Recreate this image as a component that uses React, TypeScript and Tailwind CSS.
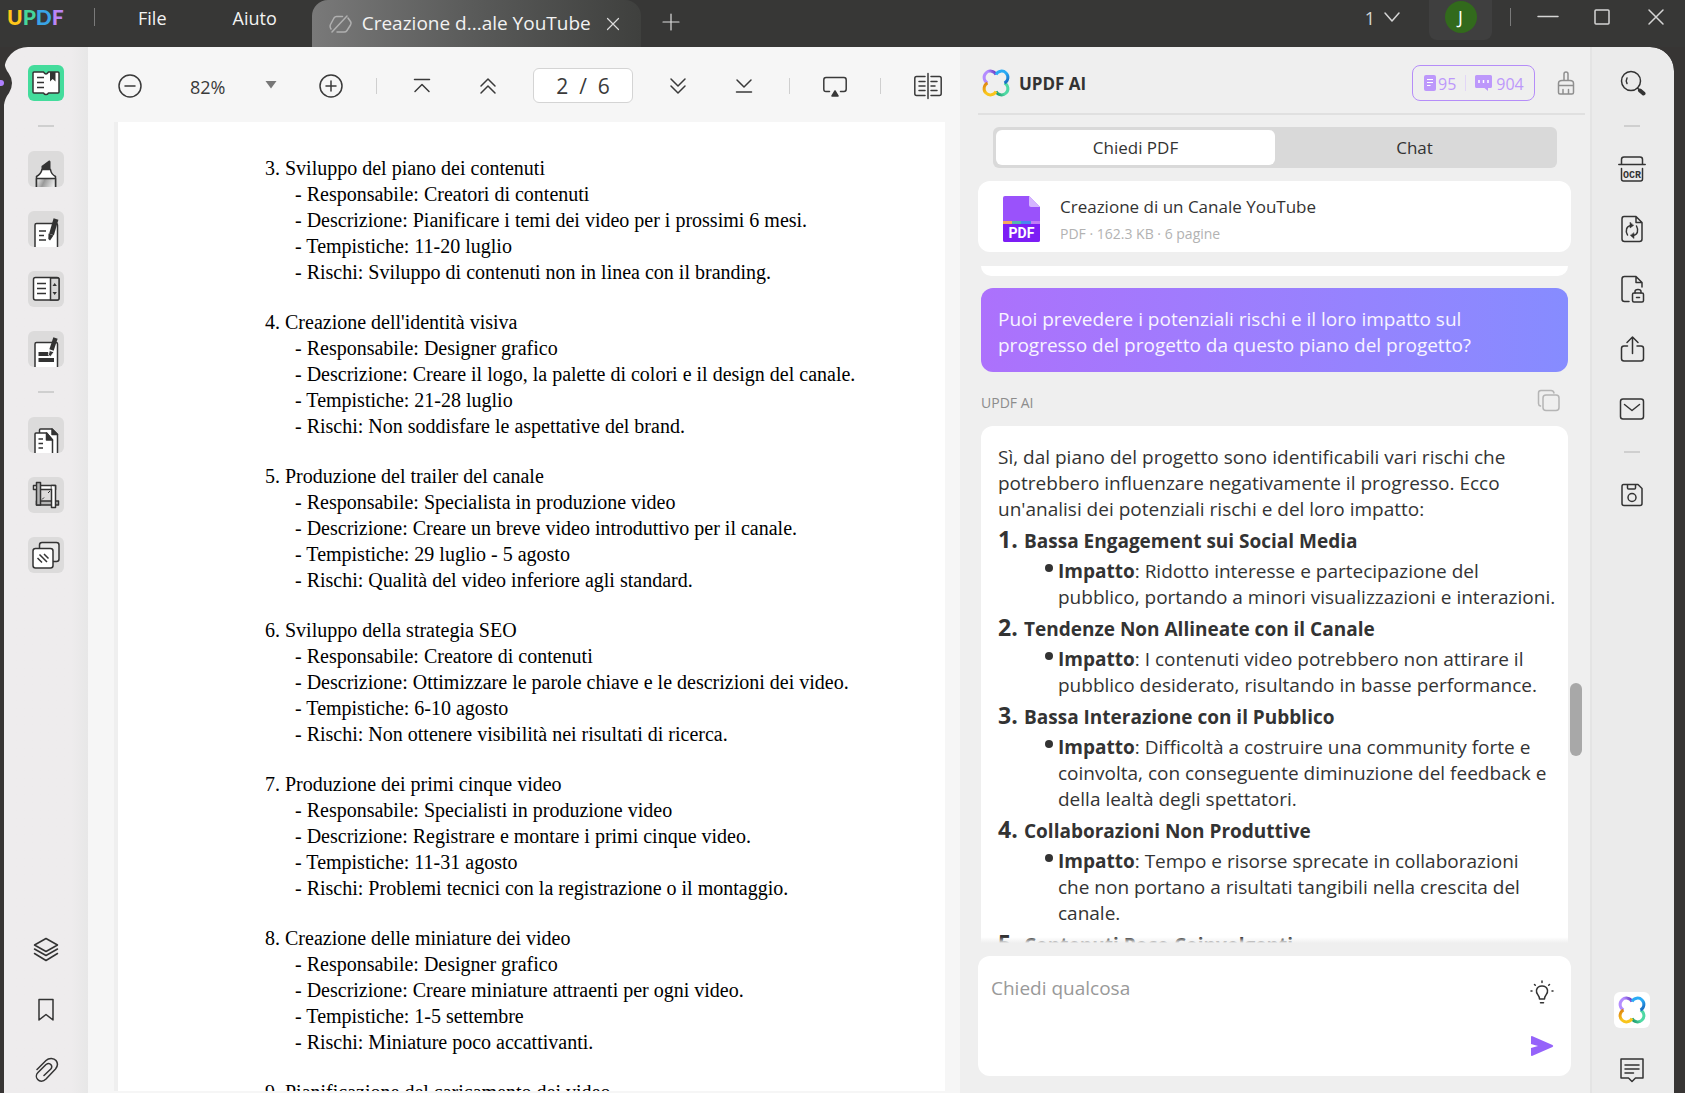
import React from "react";

type IconProps = { children: React.ReactNode; size?: number; w?: number };

const INK = "#333333";

function Ico({ children, size = 24, w = 2 }: IconProps) {
  return (
    <svg
      width={size}
      height={size}
      viewBox={`0 0 ${size} ${size}`}
      fill="none"
      stroke="currentColor"
      strokeWidth={w}
      strokeLinecap="round"
      strokeLinejoin="round"
      aria-hidden="true"
      className="shrink-0"
    >
      {children}
    </svg>
  );
}

function Clover({ id }: { id: string }) {
  return (
    <svg width="28" height="28" viewBox="0 0 28 28" fill="none" strokeWidth="3" aria-hidden="true" className="shrink-0">
      <defs>
        <linearGradient id={id + "a"} x1="2" y1="10" x2="14" y2="5" gradientUnits="userSpaceOnUse">
          <stop offset="0.5" stopColor="#b48cff" />
          <stop offset="1" stopColor="#6a3fc8" />
        </linearGradient>
        <linearGradient id={id + "b"} x1="16" y1="3" x2="23" y2="14" gradientUnits="userSpaceOnUse">
          <stop offset="0.4" stopColor="#2aabf5" />
          <stop offset="1" stopColor="#1a6fc4" />
        </linearGradient>
        <linearGradient id={id + "c"} x1="26" y1="17" x2="14" y2="23" gradientUnits="userSpaceOnUse">
          <stop offset="0.5" stopColor="#4fd9a4" />
          <stop offset="1" stopColor="#1d9a6c" />
        </linearGradient>
        <linearGradient id={id + "d"} x1="12" y1="25" x2="5" y2="14" gradientUnits="userSpaceOnUse">
          <stop offset="0.4" stopColor="#f9c51c" />
          <stop offset="1" stopColor="#e08a10" />
        </linearGradient>
      </defs>
      <path d="M5.500 14A6.300 6.300 0 1 1 14 5.500" stroke={`url(#${id}a)`} />
      <path d="M22.500 14A6.300 6.300 0 1 1 14 22.500" stroke={`url(#${id}c)`} />
      <path d="M14 22.500A6.300 6.300 0 1 1 5.500 14" stroke={`url(#${id}d)`} />
      <path d="M14 5.500A6.300 6.300 0 1 1 22.500 14" stroke={`url(#${id}b)`} />
    </svg>
  );
}

function Tool({ label, active, children }: { label: string; active?: boolean; children: React.ReactNode }) {
  return (
    <button
      type="button"
      aria-label={label}
      className={
        active
          ? "size-9 overflow-hidden rounded-md bg-[#44dc9c]"
          : "size-9 overflow-hidden rounded-md bg-[#dcdbdb]"
      }
    >
      <svg width="36" height="36" viewBox="0 0 36 36" fill="none" stroke={INK} strokeWidth="1.500" strokeLinejoin="round" aria-hidden="true">
        {children}
      </svg>
    </button>
  );
}

function Plain({ label, children, size = 28 }: { label: string; children: React.ReactNode; size?: number }) {
  return (
    <button type="button" aria-label={label} className="flex size-9 items-center justify-center text-[#333]">
      <Ico size={size} w={1.5}>{children}</Ico>
    </button>
  );
}

const Dash = () => <div className="h-0.5 w-4 bg-[#cfcfcf]" />;

function LeftBar() {
  return (
    <nav aria-label="Strumenti" className="flex w-21 shrink-0 flex-col items-center gap-6 bg-linear-to-r from-[#eeeced] from-80% to-[#e7e7e7] pt-[18px] pb-[5px]">
      <Tool label="Lettore" active>
        <path d="M6 7H15.500Q17 9 18 9Q19 9 20.500 7H30Q31 7 31 8V27Q31 28 30 28H20.500Q19.500 29.500 18 29.500T15.500 28H6Q5 28 5 27V8Q5 7 6 7Z" fill="#fff" />
        <path d="M9 12.500H16M9 17.500H16M9 22.500H16" />
        <path d="M22 7H27.500V16.500L24.700 14L22 16.500Z" fill={INK} stroke="none" />
      </Tool>
      <Dash />
      <Tool label="Commento">
        <defs>
          <linearGradient id="hl" x1="8" y1="27" x2="28" y2="36" gradientUnits="userSpaceOnUse">
            <stop stopColor="#ffffff" />
            <stop offset="0.400" stopColor="#999" />
            <stop offset="1" stopColor="#fff" />
          </linearGradient>
        </defs>
        <path d="M13.500 19V15L21 9.500Q22.500 9 22.500 11V19Z" fill={INK} stroke="none" />
        <path d="M14 18.500H22.500Q23 23 27.500 25.500V37H8.500V25.500Q13 23 14 18.500Z" fill="#fff" />
        <path d="M8.500 27.500H27.500V37H8.500Z" fill="url(#hl)" />
      </Tool>
      <Tool label="Modifica">
        <path d="M7 37V14Q7 12.500 8.500 12.500H28Q29.500 12.500 29.500 14V37" fill="#fff" />
        <path d="M11 20H18M11 24.500H16M11 29H18" />
        <path d="M28 8L23.500 23.500" strokeWidth="5" />
        <path d="M20.500 22.500L25.500 24.500L22 29.500L20.300 28Z" fill={INK} stroke="none" />
      </Tool>
      <Tool label="Modulo">
        <rect x="5.500" y="6.500" width="25.500" height="22.500" rx="2" fill="#fff" />
        <path d="M22.500 7H29.500Q31 7 31 8V27.500Q31 29 29.500 29H22.500Z" fill="#d5d5d5" />
        <path d="M9 12.500H18M9 17.500H18M9 22.500H18" />
        <path d="M24.500 15L26.700 12L28.900 15ZM24.500 21L26.700 24L28.900 21Z" fill={INK} stroke="none" />
      </Tool>
      <Tool label="Oscura">
        <path d="M7 37V13Q7 11.500 8.500 11.500H28Q29.500 11.500 29.500 13V37" fill="#fff" />
        <path d="M10.500 21H20L22 25H10.500ZM10.500 27H26V31H10.500Z" fill={INK} stroke="none" />
        <path d="M27.500 7L23.500 19" strokeWidth="4.500" stroke={INK} />
        <path d="M21.500 19.500L26 21L22.500 25.500L20.300 24Z" fill={INK} stroke="#fff" strokeWidth="0.800" />
      </Tool>
      <Dash />
      <Tool label="Organizza pagine">
        <path d="M11.500 16V13Q11.500 12 12.500 12H24L29.500 17.500V37H15" fill="#fff" />
        <path d="M24 12L29.500 17.500H24Z" fill={INK} />
        <path d="M7 37V17Q7 16 8 16H18.500L24.500 23V37" fill="#fff" />
        <path d="M18.500 16L24.500 23H18.500Z" fill={INK} />
        <path d="M10.500 22H15M10.500 26.500H15M10.500 31H15" />
      </Tool>
      <Tool label="Ritaglia">
        <path d="M5.500 8.500H27.500V12.500H5.500Z" fill="#fff" />
        <path d="M8.500 24H30.500V28H8.500Z" fill="#b5b5b5" />
        <path d="M8.500 5.500H12.500V28H8.500Z" fill="#b5b5b5" />
        <path d="M23.500 8.500H27.500V30.500H23.500Z" fill="#fff" />
        <path d="M24.300 9.300V11.700" stroke="#fff" />
        <path d="M14 22.500L16 20.500M20 16L22 14" strokeWidth="1" />
      </Tool>
      <Tool label="Filigrana">
        <rect x="11.500" y="5.500" width="19.500" height="19" rx="2.500" fill="#e9e9e9" />
        <rect x="5" y="11.500" width="20" height="19.500" rx="2.500" fill="#fff" />
        <path d="M9.500 21L14 25.500M11.500 17.500L19 25M16 17L20.500 21.500" />
      </Tool>
      <div className="mt-auto flex flex-col gap-6">
        <Plain label="Livelli">
          <path d="M14 2.500L25.500 9L14 15.500L2.500 9ZM2.500 13L14 19.500L25.500 13M2.500 17.500L14 24.500L25.500 17.500" />
        </Plain>
        <Plain label="Segnalibri">
          <path d="M7 3.500H21V24L14 18.500L7 24Z" />
        </Plain>
        <Plain label="Allegati">
          <path d="M5 13.500L14 4.500C17 1.500 22 2 24 4.500C26 7 25.500 10.500 23.500 13L14 23C11 26 7.500 25.500 5.700 23.500C3.800 21.500 4 18.500 6 16.500L14 8.500C16 7 18 7.500 19 8.700C20 10 20 11.500 18.800 13L12 19.500" />
        </Plain>
      </div>
    </nav>
  );
}

function RightBar() {
  return (
    <nav aria-label="Azioni" className="flex w-21 shrink-0 flex-col items-center gap-6 rounded-tr-3xl border-l-2 border-[#e4e4e4] bg-[#ebebeb] pt-[18px] pr-0.5 pb-[5px]">
      <Plain label="Cerca">
        <circle cx="13" cy="12" r="9.500" />
        <path d="M9 9Q7.500 12 9 14.500" />
        <path d="M19.500 19L21 20.500" />
        <path d="M22 21.500L25.500 24.500" strokeWidth="4" />
      </Plain>
      <Dash />
      <Plain label="OCR">
        <path d="M3.500 9V4.500Q3.500 2 6 2H22Q24.500 2 24.500 4.500V9M0.800 9.500H27.200M3.500 13.500V24Q3.500 26 5.500 26H22.500Q24.500 26 24.500 24V13.500" />
        <text x="14" y="22.500" textAnchor="middle" fontSize="10" fontWeight="700" fill={INK} stroke="none" fontFamily="Liberation Mono, monospace">OCR</text>
      </Plain>
      <Plain label="Converti">
        <path d="M6 1.500H18L24 7.500V24Q24 26.500 21.500 26.500H6.500Q4 26.500 4 24V4Q4 1.500 6 1.500ZM18 1.500V7.500H24" />
        <path d="M9.500 20C7 15.500 8.500 11 13 10.500M18.500 11C21 15.500 19.500 20 15 20.500" />
        <path d="M12 7.500V13L15.500 10.500ZM16 18V23.500L12.500 20.500Z" fill={INK} strokeWidth="0.500" />
      </Plain>
      <Plain label="Proteggi">
        <path d="M11 26.500H6.500Q4 26.500 4 24V4Q4 1.500 6.500 1.500H18L24 7.500V12M18 1.500V7.500H24" />
        <rect x="14.500" y="18" width="11" height="9" rx="1.500" />
        <path d="M17 18V16.500Q17 14.500 20 14.500T23 16.500V18M18.500 22.500H21.500" />
      </Plain>
      <Plain label="Condividi">
        <path d="M9.500 11H6Q3.500 11 3.500 13.500V23.500Q3.500 26 6 26H23Q25.500 26 25.500 23.500V13.500Q25.500 11 23 11H19M14.500 18.500V2M9 7.500L14.500 2L20 7.500" />
      </Plain>
      <Plain label="E-mail">
        <rect x="2.500" y="4" width="23" height="20" rx="2.500" />
        <path d="M6.500 9.500L14 15.500L21.500 9.500" />
      </Plain>
      <Dash />
      <Plain label="Salva">
        <path d="M5.500 3.500H20L24 7.500V22.500Q24 24.500 22 24.500H6Q4 24.500 4 22.500V5.500Q4 3.500 5.500 3.500ZM9.500 3.500V7Q9.500 8 10.500 8H16.500Q17.500 8 17.500 7V3.500" />
        <circle cx="14" cy="16.500" r="4" />
      </Plain>
      <div className="mt-auto flex flex-col gap-6">
        <button type="button" aria-label="UPDF AI" className="flex size-9 items-center justify-center rounded-md bg-white">
          <Clover id="r" />
        </button>
        <Plain label="Commenti">
          <path d="M3 3H25V22H17.500L14 25.500L10.500 22H3Z" />
          <path d="M7 9H21M7 13H21M7 17H15.500" />
        </Plain>
      </div>
    </nav>
  );
}

function TitleBar() {
  return (
    <header className="flex h-[47px] shrink-0 items-start bg-[#373736] text-[#f2f2f2]">
      <div className="flex h-9 items-center">
        <div className="w-[88px] pb-0.5 pl-[7px] font-['Lato'] text-[21px] font-black">
          <span className="text-[#ffc61a]">U</span>
          <span className="text-[#45d69c]">P</span>
          <span className="text-[#39a4e6]">D</span>
          <span className="text-[#bb85f5]">F</span>
        </div>
        <div className="mb-0.5 ml-1.5 h-[18px] w-px bg-[#7a7a7a]" />
        <button type="button" className="ml-[43px] text-lg">File</button>
        <button type="button" className="ml-[66px] text-lg">Aiuto</button>
      </div>
      <div className="ml-[35px] flex h-full w-[329px] items-center rounded-t-2xl bg-linear-to-r from-[#797979] via-[#595a59] via-50% to-[#3f403e] pl-4">
        <span className="text-[#b0b0b0]">
          <Ico w={1.5}>
            <path d="M4 20L19 4M14.500 4.500H8.500Q7 4.500 6 6L2.500 12.500Q1.500 14.500 3 17M9 20H16Q18 20 19 18.500L22.500 13Q23.500 11 22.500 9.500L20 6" />
          </Ico>
        </span>
        <span className="ml-2.5 text-[19px] whitespace-nowrap">Creazione d...ale YouTube</span>
        <button type="button" aria-label="Chiudi scheda" className="mr-5 ml-auto text-[#dcdcdc]">
          <Ico size={16} w={1.200}><path d="M2.500 2.500L13.500 13.500M13.500 2.500L2.500 13.500" /></Ico>
        </button>
      </div>
      <button type="button" aria-label="Nuova scheda" className="ml-5 flex h-11 items-center text-[#ddd]">
        <Ico size={20} w={1.200}><path d="M10 2V18M2 10H18" /></Ico>
      </button>
      <div className="ml-auto flex h-[34px] items-center text-[#d5d5d5]">
        <button type="button" className="mr-7 flex items-center gap-2 pt-0.5 text-lg">
          1
          <Ico size={18} w={1.500}><path d="M2 4L9 12L16 4" /></Ico>
        </button>
        <div className="flex h-10 w-[63px] items-center justify-center self-start rounded-b-lg bg-[#3f3f3f]">
          <button type="button" className="mb-1.5 size-8 rounded-full bg-[#326a1c] text-lg leading-8 text-white">J</button>
        </div>
        <div className="ml-[18px] h-[18px] w-px bg-[#7a7a7a]" />
        <button type="button" aria-label="Riduci" className="ml-[26px]">
          <Ico size={22} w={1.500}><path d="M1 10.500H21" /></Ico>
        </button>
        <button type="button" aria-label="Ingrandisci" className="ml-8">
          <Ico size={22} w={1.500}><rect x="4" y="4" width="14" height="14" rx="1" /></Ico>
        </button>
        <button type="button" aria-label="Chiudi" className="mr-[18px] ml-8">
          <Ico size={22} w={1.500}><path d="M4 4L18 18M18 4L4 18" /></Ico>
        </button>
      </div>
    </header>
  );
}

const Sep = () => <div className="h-4 w-px bg-[#cfcfcf]" />;

function Btn({ label, children, size = 24 }: { label: string; children: React.ReactNode; size?: number }) {
  return (
    <button type="button" aria-label={label}>
      <Ico size={size} w={1.500}>{children}</Ico>
    </button>
  );
}

function Toolbar() {
  return (
    <div className="flex h-[75px] items-center px-[30px] pt-0.5 text-[#3a3a3a]">
      <Btn label="Riduci zoom"><circle cx="12" cy="12" r="11" /><path d="M7 12H17" /></Btn>
      <label className="relative ml-12">
        <select aria-label="Zoom" className="w-[89px] appearance-none bg-transparent pt-0.5 text-lg">
          <option>82%</option>
        </select>
        <svg width="12" height="8" viewBox="0 0 12 8" className="pointer-events-none absolute top-2.5 right-0.5" aria-hidden="true">
          <path d="M0.500 0H11.500L6 7.500Z" fill="#777" />
        </svg>
      </label>
      <div className="ml-10 flex items-center gap-[33px]">
        <Btn label="Aumenta zoom"><circle cx="12" cy="12" r="11" /><path d="M7 12H17M12 7V17" /></Btn>
        <Sep />
        <div className="flex gap-[42px]">
          <Btn label="Prima pagina"><path d="M4.500 5.500H19.500M5 17.500L12 10.500L19 17.500" /></Btn>
          <Btn label="Pagina precedente"><path d="M5 12L12 5L19 12M5 19L12 12L19 19" /></Btn>
        </div>
        <input
          aria-label="Pagina"
          defaultValue="2  /  6"
          className="h-[35px] w-[100px] rounded-md border border-[#d4d4d4] bg-white text-center text-[21px] whitespace-pre"
        />
        <div className="flex gap-[42px]">
          <Btn label="Pagina successiva"><path d="M5 5L12 12L19 5M5 12L12 19L19 12" /></Btn>
          <Btn label="Ultima pagina"><path d="M5 6L12 13L19 6M4.500 18H19.500" /></Btn>
        </div>
        <Sep />
        <Btn label="Presentazione">
          <path d="M6.500 17.500H3Q0.800 17.500 0.800 15V6Q0.800 3.500 3 3.500H21Q23.200 3.500 23.200 6V15Q23.200 17.500 21 17.500H17.500" />
          <path d="M12 17L15 22H9Z" fill="currentColor" />
        </Btn>
        <Sep />
        <Btn label="Confronta" size={28}>
          <path d="M11 4.500H2.500Q0.800 4.500 0.800 6.500V21.500Q0.800 23.500 2.500 23.500H11M17 4.500H25.500Q27.200 4.500 27.200 6.500V21.500Q27.200 23.500 25.500 23.500H17M14 1.500V26.500" />
          <path d="M5 9.500H11M5 14H11M5 18.500H11M17 9.500H23M17 14H21M17 18.500H23" />
        </Btn>
      </div>
    </div>
  );
}

const sections: { t: string; l: string[] }[] = [
  { t: "3. Sviluppo del piano dei contenuti", l: ["Responsabile: Creatori di contenuti", "Descrizione: Pianificare i temi dei video per i prossimi 6 mesi.", "Tempistiche: 11-20 luglio", "Rischi: Sviluppo di contenuti non in linea con il branding."] },
  { t: "4. Creazione dell'identità visiva", l: ["Responsabile: Designer grafico", "Descrizione: Creare il logo, la palette di colori e il design del canale.", "Tempistiche: 21-28 luglio", "Rischi: Non soddisfare le aspettative del brand."] },
  { t: "5. Produzione del trailer del canale", l: ["Responsabile: Specialista in produzione video", "Descrizione: Creare un breve video introduttivo per il canale.", "Tempistiche: 29 luglio - 5 agosto", "Rischi: Qualità del video inferiore agli standard."] },
  { t: "6. Sviluppo della strategia SEO", l: ["Responsabile: Creatore di contenuti", "Descrizione: Ottimizzare le parole chiave e le descrizioni dei video.", "Tempistiche: 6-10 agosto", "Rischi: Non ottenere visibilità nei risultati di ricerca."] },
  { t: "7. Produzione dei primi cinque video", l: ["Responsabile: Specialisti in produzione video", "Descrizione: Registrare e montare i primi cinque video.", "Tempistiche: 11-31 agosto", "Rischi: Problemi tecnici con la registrazione o il montaggio."] },
  { t: "8. Creazione delle miniature dei video", l: ["Responsabile: Designer grafico", "Descrizione: Creare miniature attraenti per ogni video.", "Tempistiche: 1-5 settembre", "Rischi: Miniature poco accattivanti."] },
  { t: "9. Pianificazione del caricamento dei video", l: [] },
];

function Document() {
  return (
    <main className="flex min-w-0 flex-1 flex-col bg-[#f6f6f6]">
      <Toolbar />
      <div className="mr-[15px] mb-0.5 ml-[26px] min-h-0 flex-1 overflow-hidden border-l-4 border-[#efefef] bg-white">
        <div className="flex flex-col gap-6 pt-[33px] pl-[147px] font-['Liberation_Serif'] text-[20px] leading-[26px] whitespace-nowrap text-black">
          {sections.map((s) => (
            <section key={s.t}>
              <h2>{s.t}</h2>
              <ul className="pl-[30px]">
                {s.l.map((x) => (
                  <li key={x}>- {x}</li>
                ))}
              </ul>
            </section>
          ))}
        </div>
      </div>
    </main>
  );
}

const risks: { t: string; l: string[] }[] = [
  { t: "Bassa Engagement sui Social Media", l: ["Ridotto interesse e partecipazione del", "pubblico, portando a minori visualizzazioni e interazioni."] },
  { t: "Tendenze Non Allineate con il Canale", l: ["I contenuti video potrebbero non attirare il", "pubblico desiderato, risultando in basse performance."] },
  { t: "Bassa Interazione con il Pubblico", l: ["Difficoltà a costruire una community forte e", "coinvolta, con conseguente diminuzione del feedback e", "della lealtà degli spettatori."] },
  { t: "Collaborazioni Non Produttive", l: ["Tempo e risorse sprecate in collaborazioni", "che non portano a risultati tangibili nella crescita del", "canale."] },
  { t: "Contenuti Poco Coinvolgenti", l: [] },
];

function AiPanel() {
  return (
    <aside className="flex w-[630px] shrink-0 flex-col bg-[#efefef]">
      <div className="mr-[5px] ml-[18px] flex h-[68px] items-center border-b-2 border-[#e0e0e0] pt-1.5 pr-[7px] pl-1">
        <Clover id="h" />
        <h1 className="ml-[9px] pt-0.5 text-[17px] font-bold text-[#333]">UPDF AI</h1>
        <div className="ml-auto flex h-9 w-[123px] items-center rounded-lg border border-[#b58df8] pl-[11px] text-base text-[#bd98fb]">
          <svg width="12" height="16" viewBox="0 0 12 16" className="shrink-0" aria-hidden="true">
            <rect width="12" height="16" rx="2" fill="#bd98fb" />
            <path d="M3 4.500H9M3 7.500H9M3 10.500H6.500" stroke="#fff" strokeWidth="1.200" />
          </svg>
          <span className="ml-0.5 pt-0.5">95</span>
          <span className="mx-[9px] h-4 w-px bg-[#e2d6f7]" />
          <svg width="17" height="16" viewBox="0 0 17 16" className="shrink-0" aria-hidden="true">
            <path d="M1.500 0H15.500Q17 0 17 1.500V11.500Q17 13 15.500 13H13V16L9.500 13H1.500Q0 13 0 11.500V1.500Q0 0 1.500 0Z" fill="#bd98fb" />
            <path d="M4 5V8M8.500 5V8M13 5V8" stroke="#fff" strokeWidth="1.500" />
          </svg>
          <span className="ml-1 pt-0.5">904</span>
        </div>
        <button type="button" aria-label="Pulisci" className="ml-[19px] text-[#8f8f8f]">
          <Ico w={1.500}>
            <path d="M10 9.500V3Q10 1 12 1T14 3V9.500M4.500 15V12.500Q4.500 9.500 8 9.500H16Q19.500 9.500 19.500 12.500V15M4.500 14.500H19.500V21.500Q19.500 23 18 23H6Q4.500 23 4.500 21.500ZM9 23V18.500M14.500 23V18.500" />
          </Ico>
        </button>
      </div>

      <div role="tablist" className="mt-3 mr-[33px] ml-[33px] flex h-[41px] rounded-md bg-[#d9d9d9] p-[3px] text-[#333]">
        <button type="button" role="tab" aria-selected="true" className="flex-1 rounded-md bg-white text-[17px]">Chiedi PDF</button>
        <button type="button" role="tab" aria-selected="false" className="flex-1 text-[17px]">Chat</button>
      </div>

      <div className="mt-[13px] mr-[19px] ml-[18px] flex h-[71px] items-center rounded-xl bg-white pt-1 pl-[25px]">
        <svg width="37" height="46" viewBox="0 0 37 46" aria-hidden="true">
          <path d="M2 0H26L37 11V44Q37 46 35 46H2Q0 46 0 44V2Q0 0 2 0Z" fill="#9a52fb" />
          <path d="M26 0L37 11H28Q26 11 26 9Z" fill="#d5b5ff" />
          <path d="M0 27H37V44Q37 46 35 46H2Q0 46 0 44Z" fill="#7c1df5" />
          <path d="M0 25H9V28H0Z" fill="#f5a95c" />
          <path d="M9 25H18V28H9Z" fill="#55b5ae" />
          <path d="M18 25H28V28H18Z" fill="#4a86ee" />
          <path d="M28 25H37V28H28Z" fill="#c07df5" />
          <text x="18.500" y="42" textAnchor="middle" fontSize="14" fontWeight="700" fill="#fff" fontFamily="Roboto, sans-serif">PDF</text>
        </svg>
        <div className="ml-5 pt-0.5">
          <p className="text-[17px] leading-7 text-[#333]">Creazione di un Canale YouTube</p>
          <p className="text-sm leading-[26px] text-[#b2b2b2]">PDF · 162.3 KB · 6 pagine</p>
        </div>
      </div>

      <div className="relative mt-3.5 flex min-h-0 flex-1 flex-col pr-[22px] pl-[21px]">
        <div className="h-2.5 shrink-0 rounded-b-xl bg-white" />
        <p className="mt-3 flex h-[84px] shrink-0 flex-col justify-center rounded-xl bg-linear-to-r from-[#ac71fc] to-[#868cff] px-[17px] pt-1 text-[19px] leading-[26px] whitespace-nowrap text-[#f8f4ff]">
          <span>Puoi prevedere i potenziali rischi e il loro impatto sul</span>
          <span>progresso del progetto da questo piano del progetto?</span>
        </p>
        <div className="flex h-[54px] shrink-0 items-center justify-between pt-1 pr-[7px] text-sm text-[#8c8c8c]">
          <span className="pt-1">UPDF AI</span>
          <button type="button" aria-label="Copia" className="text-[#b5b5b5]">
            <Ico w={1.500}>
              <path d="M3.500 17Q1.500 16.500 1.500 14.500V4Q1.500 1.500 4 1.500H14Q16.500 1.500 17 4" />
              <rect x="6" y="6" width="16" height="15.500" rx="3" />
            </Ico>
          </button>
        </div>
        <article className="min-h-0 flex-1 overflow-hidden rounded-t-xl bg-white pt-[18px] pl-[17px] text-[19px] leading-[26px] whitespace-nowrap text-[#333]">
          <p>Sì, dal piano del progetto sono identificabili vari rischi che</p>
          <p>potrebbero influenzare negativamente il progresso. Ecco</p>
          <p>un'analisi dei potenziali rischi e del loro impatto:</p>
          <ol>
            {risks.map((r, i) => (
              <li key={r.t}>
                <h3 className="flex h-9 items-baseline pt-1 font-bold">
                  <span className="w-[26px] text-[23px]">{i + 1}.</span>
                  {r.t}
                </h3>
                {r.l.length > 0 && (
                  <div className="flex pl-[47px]">
                    <span className="mt-[6px] mr-[5px] size-2 rounded-full bg-[#333]" />
                    <div>
                      {r.l.map((x, j) => (
                        <p key={x}>
                          {j === 0 && <b>Impatto</b>}
                          {j === 0 ? ": " + x : x}
                        </p>
                      ))}
                    </div>
                  </div>
                )}
              </li>
            ))}
          </ol>
        </article>
        <div className="absolute right-0 bottom-0 left-0 h-1.5 bg-linear-to-t from-[#efefef] to-transparent" />
        <div className="absolute top-[417px] right-2 h-[73px] w-3 rounded-full bg-[#a8a8a8]" />
      </div>

      <div className="mt-[13px] mr-[19px] mb-[17px] ml-[18px] flex h-[120px] justify-between rounded-xl bg-white pt-[18px] pr-[17px] pb-[18px] pl-[13px]">
        <textarea
          aria-label="Chiedi qualcosa"
          placeholder="Chiedi qualcosa"
          className="min-w-0 flex-1 resize-none text-[19px] leading-7 placeholder:text-[#999]"
        />
        <div className="flex flex-col justify-between pt-1.5">
          <button type="button" aria-label="Suggerimenti" className="text-[#333]">
            <Ico w={1.500}>
              <path d="M9.500 19H14.500Q14.500 17 16 15Q18 13 17.500 10Q16.500 6 12 6T6.500 10Q6 13 8 15Q9.500 17 9.500 19ZM10.500 22.800H13.500M12 1V2.500M4.500 4.500L5.300 5.300M19.500 4.500L18.700 5.300M1 11H2M22 11H23" />
            </Ico>
          </button>
          <button type="button" aria-label="Invia" className="text-[#9563fa]">
            <svg width="24" height="24" viewBox="0 0 24 24" aria-hidden="true">
              <path d="M1 3Q1 1.500 2.500 2.200L22.500 11Q24 12 22.500 13L2.500 21.800Q1 22.500 1 21V14L8 12L1 10Z" fill="currentColor" />
            </svg>
          </button>
        </div>
      </div>
    </aside>
  );
}

export default function App() {
  return (
    <div className="flex h-screen flex-col overflow-hidden bg-[#373534] font-['Open_Sans',sans-serif]">
      <TitleBar />
      <div className="relative flex min-h-0 flex-1 pr-[11px] pl-1">
        <div className="flex min-w-0 flex-1 overflow-hidden rounded-t-3xl">
          <LeftBar />
          <Document />
          <AiPanel />
          <RightBar />
        </div>
        <svg width="12" height="44" viewBox="0 0 12 44" className="absolute top-3.5 left-0" aria-hidden="true">
          <path d="M0 0H4Q5 8 8.500 12Q12 17 12 22Q12 27 9 32Q5 37 4 44H0Z" fill="#373534" />
          <circle cx="1" cy="22" r="3" fill="#b080ff" />
        </svg>
      </div>
    </div>
  );
}
